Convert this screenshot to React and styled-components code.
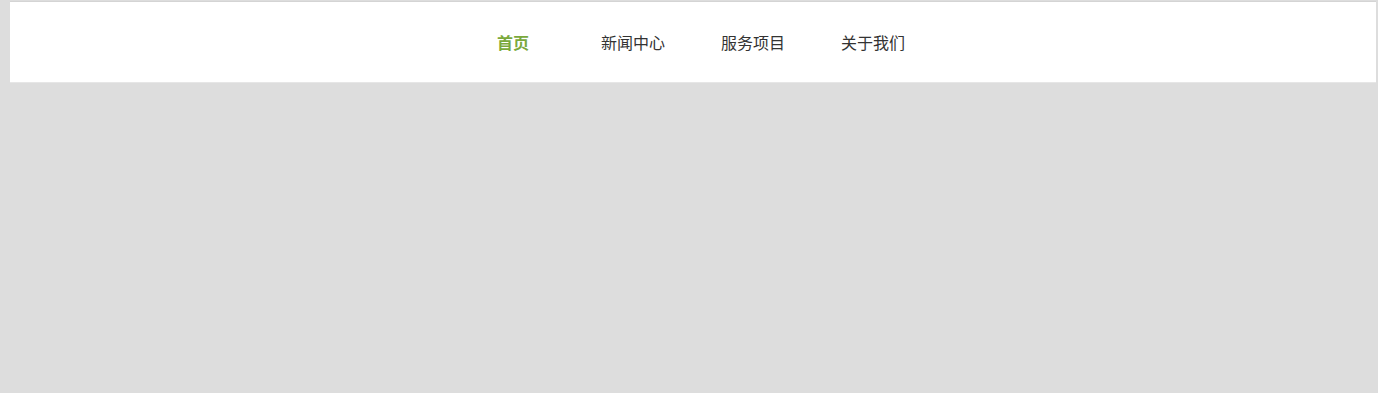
import React from "react";
import styled, { createGlobalStyle } from "styled-components";

const Global = createGlobalStyle`
  html, body {
    margin: 0;
    padding: 0;
    background: #dddddd;
    min-height: 100%;
  }
  body {
    font-family: "Microsoft YaHei", "Noto Sans CJK SC", "Liberation Sans", sans-serif;
  }
`;

const Page = styled.div`
  min-height: 100vh;
  background: #dddddd;
  padding: 1px 2px 0 10px;
  box-sizing: border-box;
`;

const Header = styled.header`
  height: 82px;
  background: #ffffff;
  border-top: 1px solid #d4d4d4;
  border-bottom: 1px solid #e6e6e6;
  display: flex;
  justify-content: center;
  align-items: center;
  box-sizing: border-box;
`;

const Nav = styled.nav`
  display: flex;
`;

const NavItem = styled.a`
  width: 120px;
  text-align: center;
  font-size: 16px;
  line-height: 20px;
  text-decoration: none;
  color: ${(p) => (p.$active ? "#7aa93c" : "#333333")};
  font-weight: ${(p) => (p.$active ? 700 : 400)};
  cursor: pointer;
`;

const items = ["首页", "新闻中心", "服务项目", "关于我们"];

export default function App() {
  return (
    <>
      <Global />
      <Page>
        <Header>
          <Nav>
            {items.map((t, i) => (
              <NavItem key={t} $active={i === 0}>
                {t}
              </NavItem>
            ))}
          </Nav>
        </Header>
      </Page>
    </>
  );
}
